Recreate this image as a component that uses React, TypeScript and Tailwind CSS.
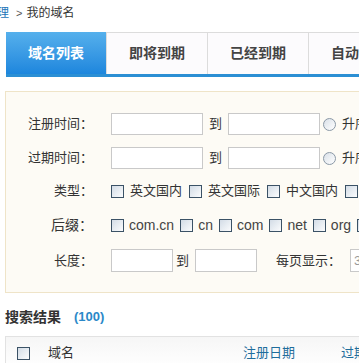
import React from "react";

const font = { fontFamily: '"Liberation Sans", "Noto Sans CJK SC", sans-serif' };

function Box() {
  return (
    <span className="inline-block w-[13px] h-[13px] border border-[#3b5266] bg-gradient-to-br from-[#d3dce6] to-[#fbfcfd] shrink-0" />
  );
}

function Radio() {
  return (
    <span className="inline-block w-[13px] h-[13px] rounded-full border border-[#8a98a6] bg-gradient-to-br from-[#d9e0e8] to-white shrink-0" />
  );
}

function Input({ w, h = 22 }: { w: number; h?: number }) {
  return (
    <span
      className="inline-block border border-[#c9c9c9] bg-white shrink-0"
      style={{ width: w, height: h }}
    />
  );
}

const tabs = ["域名列表", "即将到期", "已经到期", "自动续费", "转入域名"];

function Label({ text }: { text: string }) {
  return <div className="w-[87px] shrink-0 text-right mr-[18px]">{text}</div>;
}

export default function App() {
  return (
    <div className="w-full h-[363px] overflow-hidden bg-white text-[13px] text-[#333]" style={font}>
      <div className="w-[720px]">
        {/* breadcrumb */}
        <div className="h-[26px] flex items-center text-[12px]">
          <span className="-ml-[39px] text-[#1b74b8]">域名管理</span>
          <span className="ml-[7px] text-[#555] text-[11px]">&gt;</span>
          <span className="ml-[4px]">我的域名</span>
        </div>

        {/* tabs */}
        <div className="mt-[6px] ml-[6px] flex border-b-[3px] border-[#2b8fd4]">
          {tabs.map((t, i) =>
            i === 0 ? (
              <div
                key={t}
                className="w-[100px] h-[42px] flex items-center justify-center text-[14px] font-bold text-white bg-gradient-to-b from-[#55b0ec] to-[#1c86dd]"
              >
                {t}
              </div>
            ) : (
              <div
                key={t}
                className="w-[101px] h-[42px] flex items-center justify-center text-[14px] font-bold text-[#444] bg-[#fcfbfd] border-t border-l border-[#dcdcdc]"
              >
                {t}
              </div>
            )
          )}
        </div>

        {/* search panel */}
        <div className="mt-[14px] ml-[5px] border border-[#efe4c8] bg-[#fdfbf5] pt-[21px] pb-[20px]">
          <div className="flex items-center h-[22px]">
            <Label text="注册时间：" />
            <Input w={92} />
            <span className="mx-[6px]">到</span>
            <Input w={92} />
            <span className="ml-[3px] mr-[6px] flex"><Radio /></span>
            <span>升序</span>
            <span className="ml-[6px] flex"><Radio /></span>
            <span className="ml-[6px]">降序</span>
          </div>
          <div className="flex items-center h-[22px] mt-[12px]">
            <Label text="过期时间：" />
            <Input w={92} />
            <span className="mx-[6px]">到</span>
            <Input w={92} />
            <span className="ml-[3px] mr-[6px] flex"><Radio /></span>
            <span>升序</span>
            <span className="ml-[6px] flex"><Radio /></span>
            <span className="ml-[6px]">降序</span>
          </div>
          <div className="flex items-center h-[22px] mt-[11px]">
            <Label text="类型：" />
            {["英文国内", "英文国际", "中文国内", "中文国际"].map((t) => (
              <span key={t} className="flex items-center mr-[7px]">
                <Box />
                <span className="ml-[6px]">{t}</span>
              </span>
            ))}
          </div>
          <div className="flex items-center h-[22px] mt-[12px] text-[14px]">
            <Label text="后缀：" />
            {["com.cn", "cn", "com", "net", "org", "cc"].map((t) => (
              <span key={t} className="flex items-center mr-[6px]">
                <Box />
                <span className="ml-[5px] text-[#444]">{t}</span>
              </span>
            ))}
          </div>
          <div className="flex items-center h-[23px] mt-[13px]">
            <Label text="长度：" />
            <Input w={62} h={23} />
            <span className="ml-[3px] mr-[6px]">到</span>
            <Input w={62} h={23} />
            <span className="ml-[19px] mr-[9px]">每页显示：</span>
            <span className="w-[60px] h-[23px] border border-[#c9c9c9] bg-white text-[#999] pl-[3px] flex items-center">
              30
            </span>
          </div>
        </div>

        {/* result heading */}
        <div className="mt-[15px] ml-[5px] flex items-center h-[18px]">
          <span className="text-[14px] font-bold text-[#333]">搜索结果</span>
          <span className="ml-[13px] text-[13px] font-bold text-[#2a88c8]">(100)</span>
        </div>

        {/* table header */}
        <div className="mt-[10px] ml-[5px] border border-[#e2e2e2] h-[34px] bg-gradient-to-b from-[#f6f6f6] to-white flex items-center">
          <span className="ml-[11px] flex"><Box /></span>
          <span className="ml-[18px] w-[195px]">域名</span>
          <span className="text-[#1f6d9c] w-[98px]">注册日期</span>
          <span className="text-[#1f6d9c]">过期日期</span>
        </div>
      </div>
    </div>
  );
}
